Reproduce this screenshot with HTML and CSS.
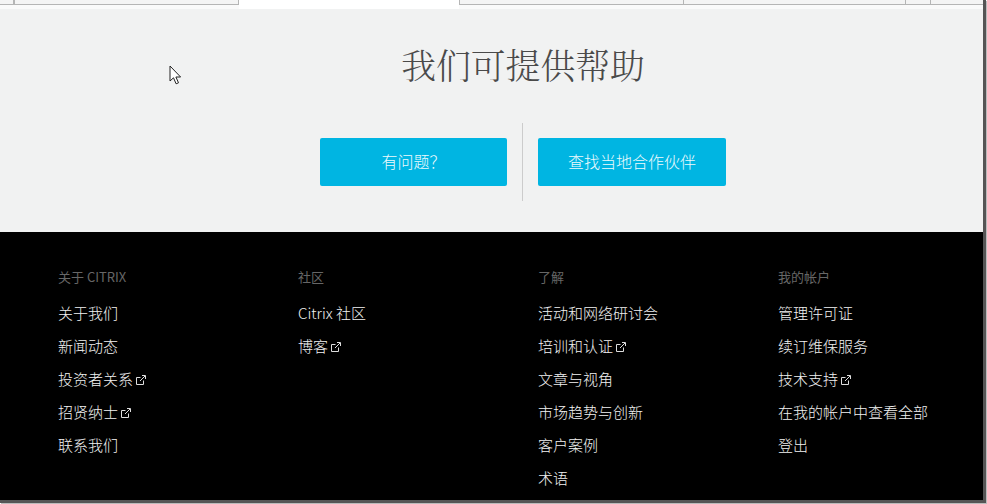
FILE: index.html
```html
<!DOCTYPE html>
<html lang="zh-CN">
<head>
<meta charset="UTF-8">
<meta name="viewport" content="width=device-width, initial-scale=1.0">
<title>我们可提供帮助</title>
<link rel="stylesheet" href="styles.css">
</head>
<body>
<svg width="0" height="0" class="defs">
  <symbol id="ext" viewBox="0 0 10 10">
    <path d="M7.5 5.5v4h-7v-7h4M4 6l5-5M6 .5h3.5V4" fill="none" stroke="currentColor" stroke-width="1"/>
  </symbol>
</svg>
<div class="window">
  <div class="tabs">
    <div class="tab tab-first"></div>
    <div class="tab tab-second"></div>
    <div class="tab tab-active"></div>
    <div class="tab tab-fourth"></div>
    <div class="tab tab-fifth"></div>
    <div class="tab tab-sixth"></div>
    <div class="tab tab-last"></div>
  </div>

  <section class="help">
    <h1>我们可提供帮助</h1>
    <div class="help-actions">
      <a class="btn" href="#">有问题&#xFF1F;</a>
      <div class="divider"></div>
      <a class="btn" href="#">查找当地合作伙伴</a>
    </div>
    <svg class="cursor" width="14" height="20" viewBox="0 0 14 20">
      <path d="M1 1v15l3.5-3.2 2.6 6 2.4-1-2.6-5.8h4.7z" fill="#fff" stroke="#222" stroke-width="1"/>
    </svg>
  </section>

  <footer class="footer">
    <div class="col">
      <h4>关于 CITRIX</h4>
      <ul>
        <li>关于我们</li>
        <li>新闻动态</li>
        <li>投资者关系<svg class="ext"><use href="#ext"/></svg></li>
        <li>招贤纳士<svg class="ext"><use href="#ext"/></svg></li>
        <li>联系我们</li>
      </ul>
    </div>
    <div class="col">
      <h4>社区</h4>
      <ul>
        <li>Citrix 社区</li>
        <li>博客<svg class="ext"><use href="#ext"/></svg></li>
      </ul>
    </div>
    <div class="col">
      <h4>了解</h4>
      <ul>
        <li>活动和网络研讨会</li>
        <li>培训和认证<svg class="ext"><use href="#ext"/></svg></li>
        <li>文章与视角</li>
        <li>市场趋势与创新</li>
        <li>客户案例</li>
        <li>术语</li>
      </ul>
    </div>
    <div class="col">
      <h4>我的帐户</h4>
      <ul>
        <li>管理许可证</li>
        <li>续订维保服务</li>
        <li>技术支持<svg class="ext"><use href="#ext"/></svg></li>
        <li>在我的帐户中查看全部</li>
        <li>登出</li>
      </ul>
    </div>
  </footer>
</div>
</body>
</html>
```

FILE: styles.css
```css
html, body {
  margin: 0;
  height: 100%;
  overflow: hidden;
  background-color: #fff;
}
body {
  font-family: "Noto Sans CJK SC", "Open Sans", sans-serif;
}
.defs {
  display: block;
}
.window {
  width: 983px;
  height: 500px;
  border-right: 3px solid #555;
  border-bottom: 3px solid #555;
  box-shadow: 1px 1px 0 #bbb;
  overflow: hidden;
}
.tabs {
  display: flex;
  height: 9px;
  background-color: #fafafa;
}
.tab {
  flex: none;
  height: 4px;
  background-color: #f4f4f4;
  border-right: 1px solid #b5b5b5;
  border-bottom: 1px solid #b5b5b5;
}
.tab-first { width: 13px; }
.tab-second { width: 223px; border-left: 1px solid #b5b5b5; }
.tab-active {
  width: 220px;
  height: 9px;
  background-color: #fff;
  border: 0;
}
.tab-fourth { width: 223px; border-left: 1px solid #b5b5b5; }
.tab-fifth { width: 221px; }
.tab-sixth { width: 24px; }
.tab-last { flex: 1; border-right: 0; }

.help {
  position: relative;
  height: 223px;
  padding-left: 63px;
  box-sizing: border-box;
  background-color: #f1f2f2;
  text-align: center;
}
.help h1 {
  margin: 0;
  padding-top: 30px;
  font-family: "Noto Serif CJK SC", "Noto Sans CJK SC", serif;
  font-size: 34.8px;
  font-weight: 300;
  line-height: 50px;
  color: #4a4a4a;
}
.help-actions {
  display: flex;
  justify-content: center;
  align-items: center;
  gap: 15px;
  margin-top: 34px;
}
.btn {
  display: block;
  width: 187px;
  height: 48px;
  line-height: 47px;
  border-radius: 2px;
  background-color: #00b5e2;
  color: #eefafd;
  font-size: 16px;
  font-weight: 300;
  text-decoration: none;
}
.btn:last-child {
  width: 188px;
}
.divider {
  width: 1px;
  height: 78px;
  background-color: #ccc;
}
.cursor {
  position: absolute;
  left: 169px;
  top: 56px;
}

.footer {
  display: flex;
  height: 272px;
  padding: 36px 0 0 58px;
  box-sizing: border-box;
  background-color: #000;
}
.col {
  flex: none;
  width: 240px;
}
.col h4 {
  margin: 0 0 11px;
  font-size: 13px;
  font-weight: 400;
  line-height: 17px;
  color: #666;
}
.col ul {
  margin: 0;
  padding: 0;
  list-style: none;
}
.col li {
  height: 33px;
  line-height: 33px;
  font-size: 15px;
  font-weight: 300;
  white-space: nowrap;
  color: #f2f2f2;
}
.ext {
  width: 10px;
  height: 10px;
  margin-left: 3px;
  color: #ddd;
}
```
